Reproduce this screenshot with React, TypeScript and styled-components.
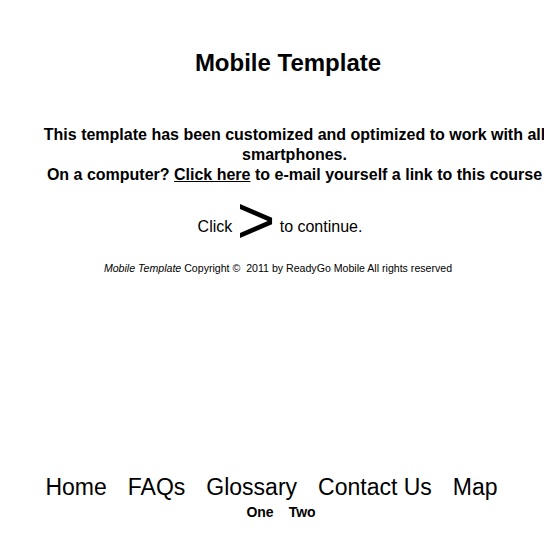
import React from 'react';
import styled, { createGlobalStyle } from 'styled-components';

const GlobalStyle = createGlobalStyle`
  html, body {
    overflow-x: hidden;
  }
  body {
    margin: 8px;
    background: #ffffff;
    color: #000000;
    font-family: "Liberation Sans", Arial, sans-serif;
  }
`;

// $shift moves the centre line of a block to the right (px)
const Centered = styled.div<{ $shift?: number }>`
  text-align: center;
  margin-right: ${(p) => -2 * (p.$shift || 0)}px;
`;

const Title = styled(Centered).attrs({ as: 'h1' })`
  font-size: 24px;
  line-height: 28px;
  font-weight: bold;
  margin-top: 41px;
  margin-bottom: 0;
`;

const Intro = styled(Centered).attrs({ as: 'p' })`
  font-size: 16px;
  line-height: 20px;
  font-weight: bold;
  margin-top: 48px;
  margin-bottom: 0;
`;

const MailLink = styled.a`
  color: #000000;
  text-decoration: underline;
`;

const ContinueRow = styled(Centered).attrs({ as: 'p' })`
  font-size: 16px;
  line-height: 20px;
  margin-top: 32px;
  margin-bottom: 0;
`;

const Arrow = styled.a`
  font-size: 66px;
  line-height: 0;
  vertical-align: -11px;
  color: #000000;
  text-decoration: none;
`;

const Copyright = styled(Centered).attrs({ as: 'p' })`
  font-size: 10.6px;
  line-height: 12px;
  margin-top: 25px;
  margin-bottom: 0;

  em {
    font-style: italic;
  }
`;

const Nav = styled(Centered).attrs({ as: 'nav' })`
  display: flex;
  justify-content: center;
  gap: 21px;
  margin-top: 200px;
  font-size: 23px;
  line-height: 27px;
`;

const SubNav = styled(Centered).attrs({ as: 'nav' })`
  display: flex;
  justify-content: center;
  gap: 15px;
  margin-top: 3px;
  font-size: 14px;
  line-height: 16px;
  font-weight: bold;
`;

const NavLink = styled.a`
  color: #000000;
  text-decoration: none;
`;

const mainLinks = ['Home', 'FAQs', 'Glossary', 'Contact Us', 'Map'];
const pageLinks = ['One', 'Two'];

const App = () => {
  return (
    <>
      <GlobalStyle />
      <Title $shift={12}>Mobile Template</Title>
      <Intro $shift={18.5}>
        This template has been customized and optimized to work with all smartphones.
        <br />
        On a computer? <MailLink href="#">Click here</MailLink> to e-mail yourself a link to this course
      </Intro>
      <ContinueRow $shift={4}>
        Click <Arrow href="#">&gt;</Arrow> to continue.
      </ContinueRow>
      <Copyright $shift={2}>
        <em>Mobile Template</em> Copyright &copy;&nbsp; 2011 by ReadyGo Mobile All rights reserved
      </Copyright>
      <Nav $shift={-4.5}>
        {mainLinks.map((l) => (
          <NavLink key={l} href="#">{l}</NavLink>
        ))}
      </Nav>
      <SubNav $shift={5}>
        {pageLinks.map((l) => (
          <NavLink key={l} href="#">{l}</NavLink>
        ))}
      </SubNav>
    </>
  );
};

export default App;
